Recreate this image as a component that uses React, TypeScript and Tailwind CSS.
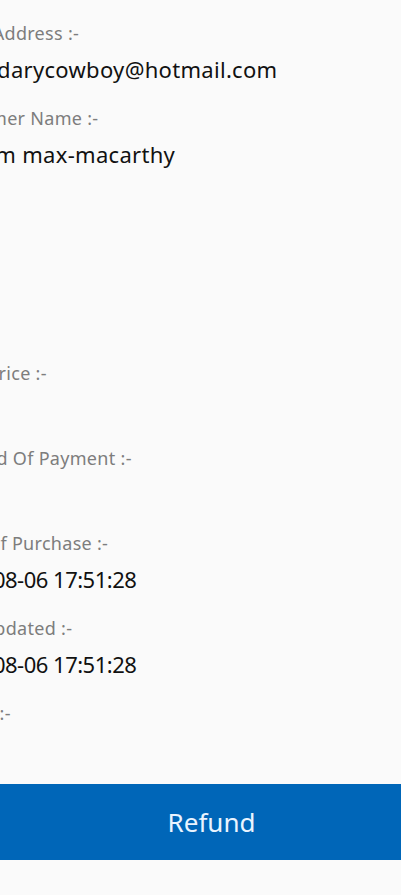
const rows = [
  { label: "Email Address :-", value: "legendarycowboy@hotmail.com" },
  { label: "Customer Name :-", value: "William max-macarthy" },
  { label: "", value: "" },
  { label: "", value: "" },
  { label: "Total Price :-", value: "" },
  { label: "Method Of Payment :-", value: "" },
  { label: "Date Of Purchase :-", value: "2023-08-06 17:51:28", num: true },
  { label: "Last Updated :-", value: "2023-08-06 17:51:28", num: true },
  { label: "Status :-", value: "" },
];

export default function App() {
  return (
    <div className="h-[895px] w-full overflow-hidden bg-[#fafafa] font-['Noto_Sans',sans-serif]">
      {/* details list, scrolled sideways so the left edge is clipped */}
      <div className="ml-[-60px] flex flex-col gap-[23px] pt-[21px]">
        {rows.map((row, i) => (
          <div key={i} className="flex flex-col gap-[10px] whitespace-nowrap">
            <div className="h-[24px] text-[18px] leading-[24px] tracking-[0.3px] text-[#7d7d7d]">{row.label}</div>
            <div
              className={
                row.num
                  ? "-ml-[2px] h-[28px] text-[22px] leading-[28px] tracking-[-0.5px] text-[#111]"
                  : "-ml-[2px] h-[28px] text-[22px] leading-[28px] tracking-[0.3px] text-[#111]"
              }
            >
              {row.value}
            </div>
          </div>
        ))}
      </div>

      <button className="mt-[21px] flex h-[76px] w-full items-center justify-center bg-[#0066b8] pl-[22px] text-[26px] text-[#eaf4ff]">
        Refund
      </button>
    </div>
  );
}
